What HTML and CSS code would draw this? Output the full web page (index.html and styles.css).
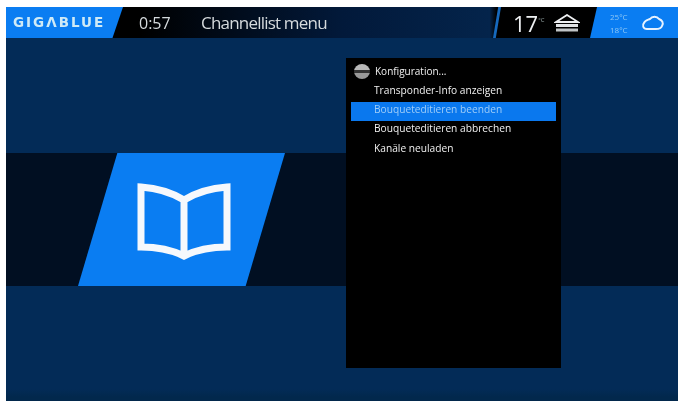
FILE: index.html
```html
<!DOCTYPE html>
<html lang="de">
<head>
    <meta charset="UTF-8">
    <title>Channellist menu</title>
    <link rel="stylesheet" href="styles.css">
</head>
<body>
    <div class="screen">
        <div class="header">
            <div class="logo">GIGΛBLUE</div>
            <div class="clock">0:57</div>
            <div class="title">Channellist menu</div>
            <div class="slash"></div>
            <div class="temp">17<span class="deg">°C</span></div>
            <svg class="home" width="26" height="18" viewBox="0 0 26 18">
                <path d="M2 8 L13 1 L24 8 Z" fill="none" stroke="#eef0f2" stroke-width="1.8"/>
                <rect x="2" y="10" width="22" height="3" fill="#e0e3e5"/>
                <rect x="2" y="14.5" width="22" height="3" fill="#c0c4c6"/>
            </svg>
            <div class="weather">
                <div class="minmax"><span>25°C</span><span>18°C</span></div>
                <svg class="cloud" width="24" height="16" viewBox="0 0 24 16">
                    <path d="M6 14 C2 14 1 10 3 8 C4 5 7 5 9 4 C11 1 16 1 18 4 C21 5 23 8 21 11 C20 14 17 14 15 14 Z" fill="none" stroke="#e6f2ff" stroke-width="2"/>
                </svg>
            </div>
        </div>
        <div class="main">
            <div class="band">
                <div class="tile">
                    <svg class="book" width="94" height="78" viewBox="0 0 94 78">
                        <path d="M4 5 C18 6 34 10 47 18 C60 10 76 6 90 5 V65 C76 65 59 68 47 74 C35 68 18 65 4 65 Z M47 18 V74" fill="none" stroke="#f6f8fc" stroke-width="7"/>
                    </svg>
                </div>
            </div>
            <div class="menu">
                <div class="menu-row menu-head">
                    <span class="menu-icon"></span>
                    <span>Konfiguration...</span>
                </div>
                <div class="menu-row">Transponder-Info anzeigen</div>
                <div class="menu-row selected">Bouqueteditieren beenden</div>
                <div class="menu-row">Bouqueteditieren abbrechen</div>
                <div class="menu-row">Kanäle neuladen</div>
            </div>
        </div>
    </div>
</body>
</html>
```

FILE: styles.css
```css
* {
    margin: 0;
    padding: 0;
    box-sizing: border-box;
}
body {
    background-color: #fff;
    font-family: 'Open Sans', sans-serif;
    width: 678px;
    height: 401px;
    overflow: hidden;
    padding: 7px 0 0 6px;
}
.screen {
    display: flex;
    flex-direction: column;
    height: 394px;
    background: linear-gradient(#032b57 97%, #02284c 99%);
    filter: blur(0.6px);
}
.header {
    display: flex;
    align-items: center;
    height: 31px;
    background: linear-gradient(to right, #000 20%, #02193a 50%, #04244b 72%, #000 73%);
    color: #d5dadd;
}
.logo {
    width: 117px;
    height: 31px;
    line-height: 31px;
    padding-left: 7px;
    background-color: #0a7df2;
    clip-path: polygon(0 0, 100% 0, 91% 100%, 0 100%);
    color: #cfeaf6;
    font-family: 'DejaVu Sans', sans-serif;
    font-size: 13.5px;
    font-weight: bold;
    letter-spacing: 2px;
}
.clock {
    margin-left: 16px;
    width: 62px;
    font-size: 16px;
}
.title {
    font-size: 17px;
    letter-spacing: -0.8px;
    width: 292px;
}
.slash {
    width: 8px;
    height: 31px;
    background-color: #1669bd;
    clip-path: polygon(65% 0, 100% 0, 35% 100%, 0 100%);
}
.temp {
    margin-left: 12px;
    font-size: 22px;
    width: 41px;
    color: #eef0f2;
}
.deg {
    font-size: 6px;
    vertical-align: 10px;
    color: #9aa;
}
.weather {
    margin-left: auto;
    width: 88px;
    height: 31px;
    padding-left: 20px;
    display: flex;
    align-items: center;
    gap: 13px;
    background-color: #0a7df2;
    clip-path: polygon(8% 0, 100% 0, 100% 100%, 0 100%);
}
.minmax {
    display: flex;
    flex-direction: column;
    font-size: 8px;
    line-height: 13px;
    color: #8cc6f5;
}
.main {
    flex: 1;
    padding-top: 115px;
    position: relative;
}
.band {
    height: 133px;
    background-color: #010f22;
    padding-left: 72px;
}
.tile {
    width: 207px;
    height: 133px;
    background-color: #0a7df2;
    clip-path: polygon(19% 0, 100% 0, 81% 100%, 0 100%);
    display: flex;
    align-items: center;
    justify-content: center;
}
.book {
    margin-left: 4px;
    margin-top: 3px;
}
.menu {
    position: absolute;
    left: 340px;
    top: 20px;
    width: 215px;
    height: 310px;
    background-color: #000;
    padding: 5.6px 5px;
    color: #f0f0f0;
    font-size: 10.2px;
}
.menu-row {
    height: 19.3px;
    line-height: 15.5px;
    padding-left: 23px;
}
.menu-head {
    display: flex;
    align-items: flex-start;
    gap: 5px;
    padding-left: 3px;
    font-size: 10px;
}
.menu-icon {
    width: 16px;
    height: 15px;
    border-radius: 50%;
    background: linear-gradient(#b8b8b8 40%, #333 40%, #333 60%, #999 60%);
}
.selected {
    background-color: #0a78ee;
    color: #9fcdf8;
}
```
